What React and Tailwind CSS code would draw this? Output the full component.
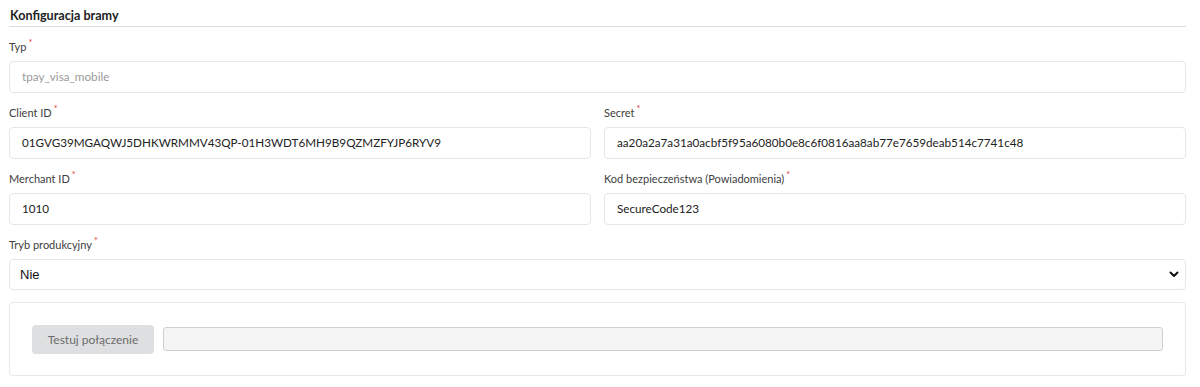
import React from "react";

function Label({ children }) {
  return (
    <div className="h-[14px] text-[11px] leading-[15px] text-[#3d3d3d] mb-[8px] flex items-start">
      <span>{children}</span>
      <span className="text-[#e3342f] text-[9px] leading-[9px] ml-[2px] -mt-[1px]">*</span>
    </div>
  );
}

function Input({ value, muted }) {
  return (
    <div
      className={
        "h-[32px] rounded-[4px] border border-[#e6e6e6] bg-white flex items-center px-[12px] text-[11.7px] " +
        (muted ? "text-[#9a9a9a]" : "text-[#222]")
      }
    >
      {value}
    </div>
  );
}

export default function App() {
  return (
    <div className="w-[1200px] h-[387px] bg-white px-[9px] pr-[14px]" style={{ fontFamily: "Lato, 'Noto Sans', sans-serif" }}>
      <div className="pt-[7px] pb-[1px] border-b border-[#dcdcdc]">
        <div className="text-[12.6px] leading-[18px] font-bold text-[#222] pl-[1px]">Konfiguracja bramy</div>
      </div>
      <div className="pt-[12px]">
        <div className="mb-[12px]">
          <Label>Typ</Label>
          <Input value="tpay_visa_mobile" muted />
        </div>
        <div className="grid grid-cols-2 gap-x-[13px]">
          <div className="mb-[12px]">
            <Label>Client ID</Label>
            <Input value="01GVG39MGAQWJ5DHKWRMMV43QP-01H3WDT6MH9B9QZMZFYJP6RYV9" />
          </div>
          <div className="mb-[12px]">
            <Label>Secret</Label>
            <Input value="aa20a2a7a31a0acbf5f95a6080b0e8c6f0816aa8ab77e7659deab514c7741c48" />
          </div>
          <div className="mb-[12px]">
            <Label>Merchant ID</Label>
            <Input value="1010" />
          </div>
          <div className="mb-[12px]">
            <Label>Kod bezpieczeństwa (Powiadomienia)</Label>
            <Input value="SecureCode123" />
          </div>
        </div>
        <div className="mb-[12px]">
          <Label>Tryb produkcyjny</Label>
          <div className="h-[31px] rounded-[4px] border border-[#e6e6e6] bg-white flex items-center justify-between pl-[10px] pr-[6px]">
            <span className="text-[13px] text-[#111]" style={{ fontFamily: "'Liberation Sans', Arial, sans-serif" }}>Nie</span>
            <svg width="10" height="7" viewBox="0 0 10 7" fill="none">
              <path d="M1.5 1.5 L5 5 L8.5 1.5" stroke="#111" strokeWidth="2" strokeLinecap="round" strokeLinejoin="round" />
            </svg>
          </div>
        </div>
        <div className="h-[74px] rounded-[4px] border border-[#e8e8e8] bg-white flex items-center pl-[22px] pr-[22px] gap-[9px]">
          <button className="h-[29px] w-[122px] rounded-[4px] bg-[#dedfe0] text-[12px] text-[#6c6c6c] mt-[1px]">
            Testuj połączenie
          </button>
          <div className="flex-1 h-[24px] rounded-[3px] border border-[#cfcfcf] bg-[#f5f5f5]" />
        </div>
      </div>
    </div>
  );
}
